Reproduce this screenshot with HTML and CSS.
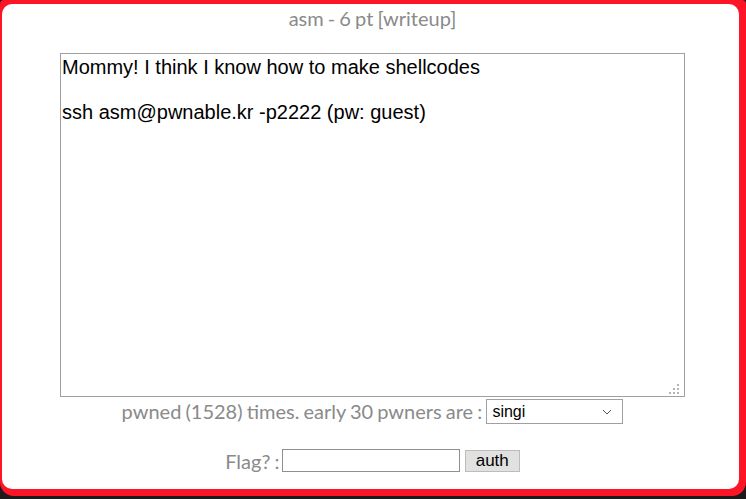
FILE: index.html
```html
<!DOCTYPE html>
<html lang="en">
<head>
    <meta charset="UTF-8">
    <meta name="viewport" content="width=device-width, initial-scale=1.0">
    <title>asm - 6 pt</title>
    <link rel="stylesheet" href="styles.css">
</head>
<body>
    <div class="frame">
        <div class="dialog">
            <div class="title">asm - 6 pt [writeup]</div>
            <div class="desc-wrap">
                <textarea class="desc" readonly>Mommy! I think I know how to make shellcodes

ssh asm@pwnable.kr -p2222 (pw: guest)</textarea>
                <svg class="grip" width="12" height="12" viewBox="0 0 12 12">
                    <rect x="8" y="0" width="2" height="2"/>
                    <rect x="4" y="4" width="2" height="2"/>
                    <rect x="8" y="4" width="2" height="2"/>
                    <rect x="0" y="8" width="2" height="2"/>
                    <rect x="4" y="8" width="2" height="2"/>
                    <rect x="8" y="8" width="2" height="2"/>
                </svg>
            </div>
            <div class="pwners">
                pwned (1528) times. early 30 pwners are :
                <span class="pick-wrap">
                    <select class="pick">
                        <option>singi</option>
                    </select>
                    <svg class="chev" width="10" height="6" viewBox="0 0 10 6">
                        <path d="M1 1 L5 5 L9 1" fill="none" stroke="#555" stroke-width="1"/>
                    </svg>
                </span>
            </div>
            <div class="flag">
                Flag? :
                <input type="text" class="flag-input">
                <button class="auth">auth</button>
            </div>
        </div>
    </div>
</body>
</html>
```

FILE: styles.css
```css
html, body {
    margin: 0;
    padding: 0;
}
body {
    background-color: #1c1a1a;
    width: 746px;
    height: 499px;
    overflow: hidden;
}
.frame {
    background-color: #fe1427;
    height: 496px;
    box-sizing: border-box;
    padding: 4px 7px 7px 2px;
    border-radius: 4px 4px 14px 14px;
}
.dialog {
    background-color: #fff;
    height: 100%;
    box-sizing: border-box;
    border-radius: 10px;
    padding-left: 4px;
    text-align: center;
    font-family: Lato, "Open Sans", sans-serif;
    font-size: 20px;
    word-spacing: -1px;
    color: #8a8a8a; /* grey labels */
}
.title {
    padding-top: 2px;
    height: 47px;
    box-sizing: border-box;
    line-height: 24px;
}
.desc-wrap {
    position: relative;
    width: 625px;
    height: 344px;
    margin: 2px auto 0;
}
.desc {
    display: block;
    width: 100%;
    height: 100%;
    box-sizing: border-box;
    border: 1px solid #a0a0a0;
    padding: 2px 1px;
    font-family: "Liberation Sans", Arial, sans-serif;
    font-size: 20px;
    line-height: 22.5px;
    word-spacing: 0;
    color: #000;
    resize: none;
    outline: none;
}
.grip {
    position: absolute;
    right: 4px;
    bottom: 1px;
    fill: #b4b4b4;
}
.pwners {
    margin-top: 2px;
    height: 26px;
    line-height: 25px;
}
.pick-wrap {
    position: relative;
    display: inline-block;
    vertical-align: top;
    height: 25px;
}
.pick {
    width: 137px;
    height: 25px;
    padding: 0 0 0 5px;
    appearance: none;
    -webkit-appearance: none;
    font-family: "Liberation Sans", Arial, sans-serif;
    font-size: 16px;
    color: #000;
    background: #fff;
    border: 1px solid #a0a0a0;
    border-radius: 0;
    vertical-align: top;
}
.chev {
    position: absolute;
    right: 11px;
    top: 10px;
}
.flag {
    margin-top: 24px;
    line-height: 24px;
}
.flag-input {
    width: 178px;
    height: 23px;
    margin-left: -2px;
    box-sizing: border-box;
    border: 1px solid #8f8f8f;
    vertical-align: top;
}
.auth {
    width: 55px;
    height: 22px;
    margin-left: 1px;
    margin-top: 1px;
    background-color: #e1e1e1;
    border: 1px solid #bcbcbc;
    font-family: "Liberation Sans", Arial, sans-serif;
    font-size: 17px;
    color: #000;
    padding: 0;
    vertical-align: top;
}
```
